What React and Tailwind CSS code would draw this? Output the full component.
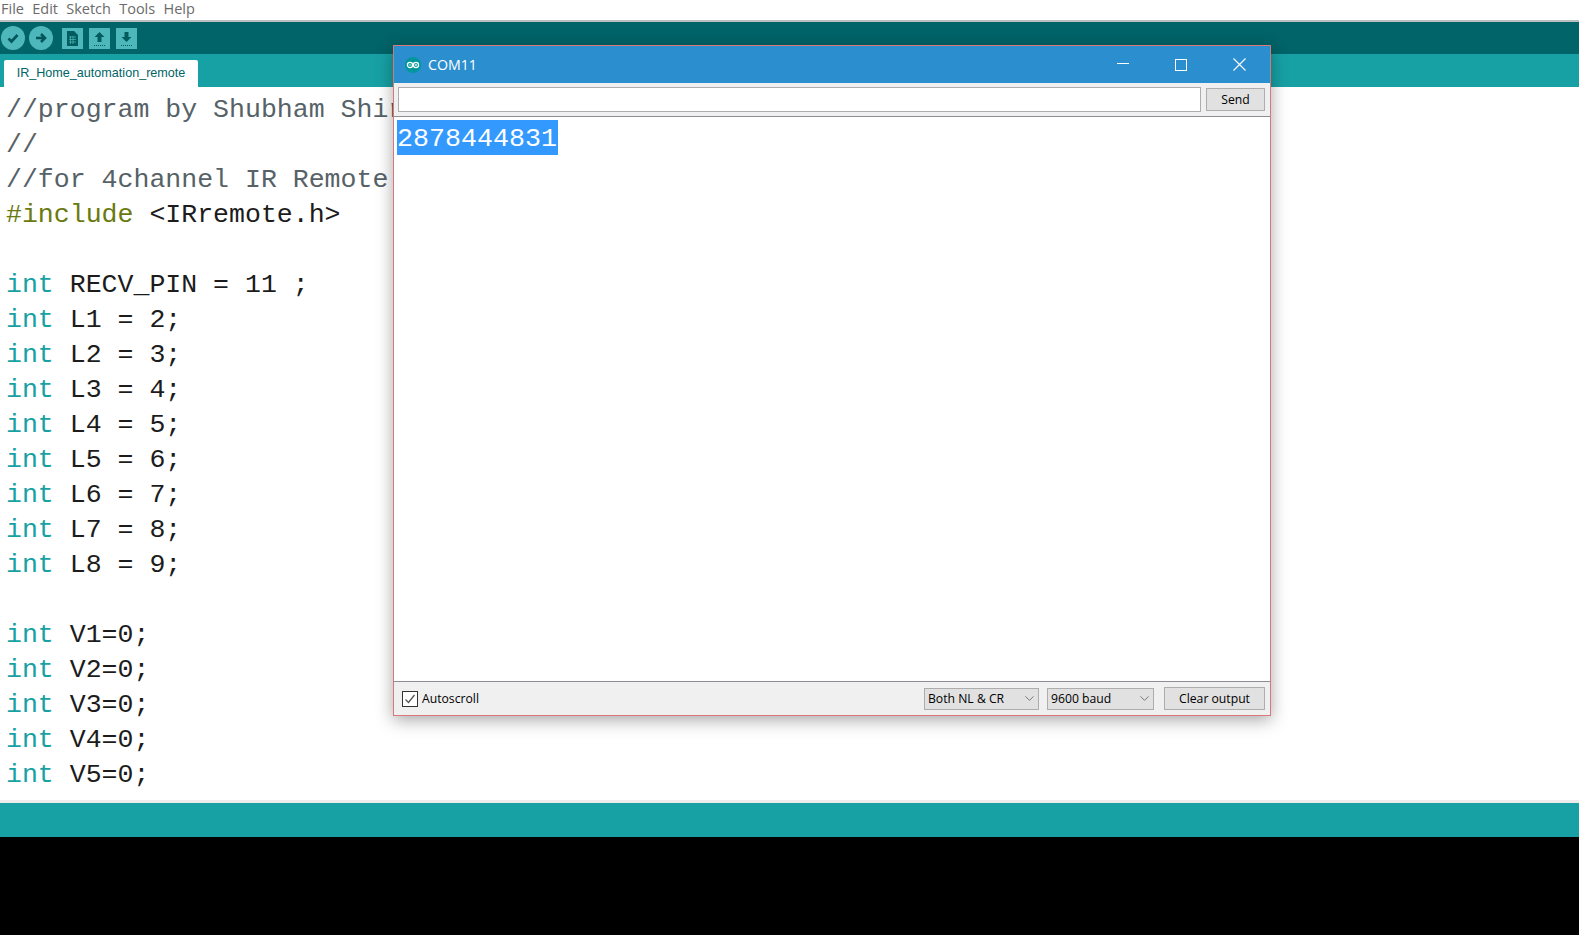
import React from 'react';
import { ChevronDown } from 'lucide-react';

const code = [
  [['c', '//program by Shubham Shirke']],
  [['c', '//']],
  [['c', '//for 4channel IR Remote Control']],
  [['i', '#include'], ['n', ' <IRremote.h>']],
  [],
  [['t', 'int'], ['n', ' RECV_PIN = 11 ;']],
  [['t', 'int'], ['n', ' L1 = 2;']],
  [['t', 'int'], ['n', ' L2 = 3;']],
  [['t', 'int'], ['n', ' L3 = 4;']],
  [['t', 'int'], ['n', ' L4 = 5;']],
  [['t', 'int'], ['n', ' L5 = 6;']],
  [['t', 'int'], ['n', ' L6 = 7;']],
  [['t', 'int'], ['n', ' L7 = 8;']],
  [['t', 'int'], ['n', ' L8 = 9;']],
  [],
  [['t', 'int'], ['n', ' V1=0;']],
  [['t', 'int'], ['n', ' V2=0;']],
  [['t', 'int'], ['n', ' V3=0;']],
  [['t', 'int'], ['n', ' V4=0;']],
  [['t', 'int'], ['n', ' V5=0;']],
];

const tokenColor = {
  c: 'text-[#566268]',
  i: 'text-[#6b7a10]',
  t: 'text-[#17a1a5]',
  n: 'text-[#1c1c1c]',
};

const menus = ['File', 'Edit', 'Sketch', 'Tools', 'Help'];

const CircleBtn = ({ children }) => (
  <div className="w-6 h-6 rounded-full bg-[#4db7bb] flex items-center justify-center">
    <svg width="14" height="14" viewBox="0 0 14 14" fill="none" stroke="#00565a" strokeWidth="2.6">
      {children}
    </svg>
  </div>
);

const SquareBtn = ({ children }) => (
  <div className="w-[21px] h-[21px] bg-[#4db7bb] flex items-center justify-center">
    <svg width="15" height="17" viewBox="0 0 15 17">{children}</svg>
  </div>
);

const Dots = () => <path d="M2 15.5h11" stroke="#005c5f" strokeWidth="1" strokeDasharray="1 1" fill="none" />;

const ArduinoLogo = () => (
  <svg width="16" height="16" viewBox="0 0 16 16" className="shrink-0">
    <circle cx="8" cy="8" r="8" fill="#00979c" />
    <circle cx="5" cy="8" r="2.6" fill="none" stroke="#fff" strokeWidth="1.2" />
    <circle cx="11" cy="8" r="2.6" fill="none" stroke="#fff" strokeWidth="1.2" />
    <path d="M3.800 8h2.400M9.800 8h2.400M11 6.800v2.400" stroke="#fff" strokeWidth="0.8" />
  </svg>
);

const ui = { fontFamily: '"Open Sans", "Noto Sans", sans-serif' };

const Select = ({ label, className }) => (
  <div className={`h-[22px] bg-[#e1e1e1] border border-[#adadad] flex items-center justify-between pl-[3px] pr-[1px] text-[12.2px] text-black ${className}`}>
    <span className="pt-[2px]">{label}</span>
    <ChevronDown size={15} strokeWidth={1.2} className="text-[#555]" />
  </div>
);

const App = () => {
  return (
    <div className="relative w-[1579px] h-[935px] overflow-hidden flex flex-col bg-black">
      {/* menu */}
      <div className="h-5 bg-white flex items-start gap-[8.25px] pl-[1px] text-[14.5px] leading-[17px] text-[#6b6b6b] shrink-0" style={ui}>
        {menus.map((m) => (
          <span key={m}>{m}</span>
        ))}
      </div>
      <div className="h-[2px] bg-[#b9bebe] shrink-0" />

      {/* toolbar */}
      <div className="h-[32px] bg-[#006468] flex items-center pl-[1px] shrink-0">
        <div className="flex gap-[4px]">
          <CircleBtn><path d="M2.500 7.500l3 3 6-6.500" /></CircleBtn>
          <CircleBtn><path d="M2 7h8M7 3l4 4-4 4" /></CircleBtn>
        </div>
        <div className="flex gap-[6px] ml-[9px]">
          <SquareBtn>
            <path d="M2 1h7l4 4v11H2z" fill="#005c5f" />
            <path d="M4 7h7M4 9.500h7M4 12h7M5.500 6v8M8 6v8" stroke="#4db7bb" strokeWidth="0.7" />
          </SquareBtn>
          <SquareBtn>
            <path d="M7.500 2l5 5H9.500v5h-4V7H2.500z" fill="#005c5f" />
            <Dots />
          </SquareBtn>
          <SquareBtn>
            <path d="M7.500 12l5-5H9.500V2h-4v5H2.500z" fill="#005c5f" />
            <Dots />
          </SquareBtn>
        </div>
      </div>

      {/* tabs */}
      <div className="h-[33px] bg-[#17a1a5] flex items-end pl-1 shrink-0">
        <div className="h-[27px] w-[194px] bg-white rounded-t-[2px] flex items-center justify-center pb-[1px] text-[12.6px] text-[#006468]" style={{ fontFamily: '"Liberation Sans", sans-serif' }}>
          IR_Home_automation_remote
        </div>
      </div>

      {/* editor */}
      <div className="h-[713px] bg-white overflow-hidden pl-[6px] pt-[6px] text-[26.55px] leading-[35px] whitespace-pre shrink-0" style={{ fontFamily: '"Liberation Mono", monospace' }}>
        {code.map((line, i) => (
          <div key={i} className="h-[35px]">
            {line.map(([k, text], j) => (
              <span key={j} className={tokenColor[k]}>{text}</span>
            ))}
          </div>
        ))}
      </div>
      <div className="h-[3px] bg-[#ececec] shrink-0" />

      {/* status */}
      <div className="h-[34px] bg-[#17a1a5] shrink-0" />

      {/* serial monitor window */}
      <div className="absolute left-[393px] top-[45px] w-[878px] h-[671px] border border-[#d9787b] bg-[#f0f0f0] flex flex-col shadow-[0_4px_16px_rgba(0,0,0,0.35)]" style={ui}>
        <div className="h-[37px] bg-[#2b8ecf] flex items-center pl-[11px] text-white shrink-0">
          <ArduinoLogo />
          <span className="ml-[7px] text-[14.2px]">COM11</span>
          <div className="ml-auto flex items-center pr-[2px]">
            <div className="w-[58px] flex justify-center pb-[2px]"><div className="w-3 h-px bg-white" /></div>
            <div className="w-[58px] flex justify-center">
              <div className="w-3 h-3 border border-white" />
            </div>
            <div className="w-[58px] flex justify-center">
              <svg width="13" height="13" viewBox="0 0 13 13" stroke="#fff" strokeWidth="1.1">
                <path d="M0.500 0.500l12 12M12.500 0.500l-12 12" />
              </svg>
            </div>
          </div>
        </div>

        <div className="h-[33px] flex items-center pl-[4px] pr-[5px] gap-[5px] shrink-0">
          <div className="h-[25px] w-[803px] bg-white border border-[#adadad]" />
          <div className="h-[23px] flex-1 bg-[#e1e1e1] border border-[#adadad] flex items-center justify-center pt-[2px] text-[12.2px] text-black">Send</div>
        </div>

        <div className="flex-1 bg-white border-y border-[#8b8f94] pl-[3px] pt-[3px] overflow-hidden">
          <span className="block w-[161px] h-[35px] bg-[#3399ff] text-white text-[26.67px] leading-[39px]" style={{ fontFamily: '"Liberation Mono", monospace' }}>2878444831</span>
        </div>

        <div className="h-[33px] flex items-center pl-[8px] pr-[5px] shrink-0 text-[12.2px] text-black">
          <div className="w-[16px] h-[16px] border border-[#333] bg-white flex items-center justify-center">
            <svg width="12" height="12" viewBox="0 0 12 12" fill="none" stroke="#555" strokeWidth="1.3">
              <path d="M1.500 6.500l3 3 6-7.500" />
            </svg>
          </div>
          <span className="ml-[4px] pt-[2px]">Autoscroll</span>
          <Select label="Both NL & CR" className="ml-auto w-[115px]" />
          <Select label="9600 baud" className="ml-[8px] w-[107px]" />
          <div className="ml-[10px] h-[23px] w-[101px] bg-[#e1e1e1] border border-[#adadad] flex items-center justify-center pt-[2px]">Clear output</div>
        </div>
      </div>
    </div>
  );
};

export default App;
